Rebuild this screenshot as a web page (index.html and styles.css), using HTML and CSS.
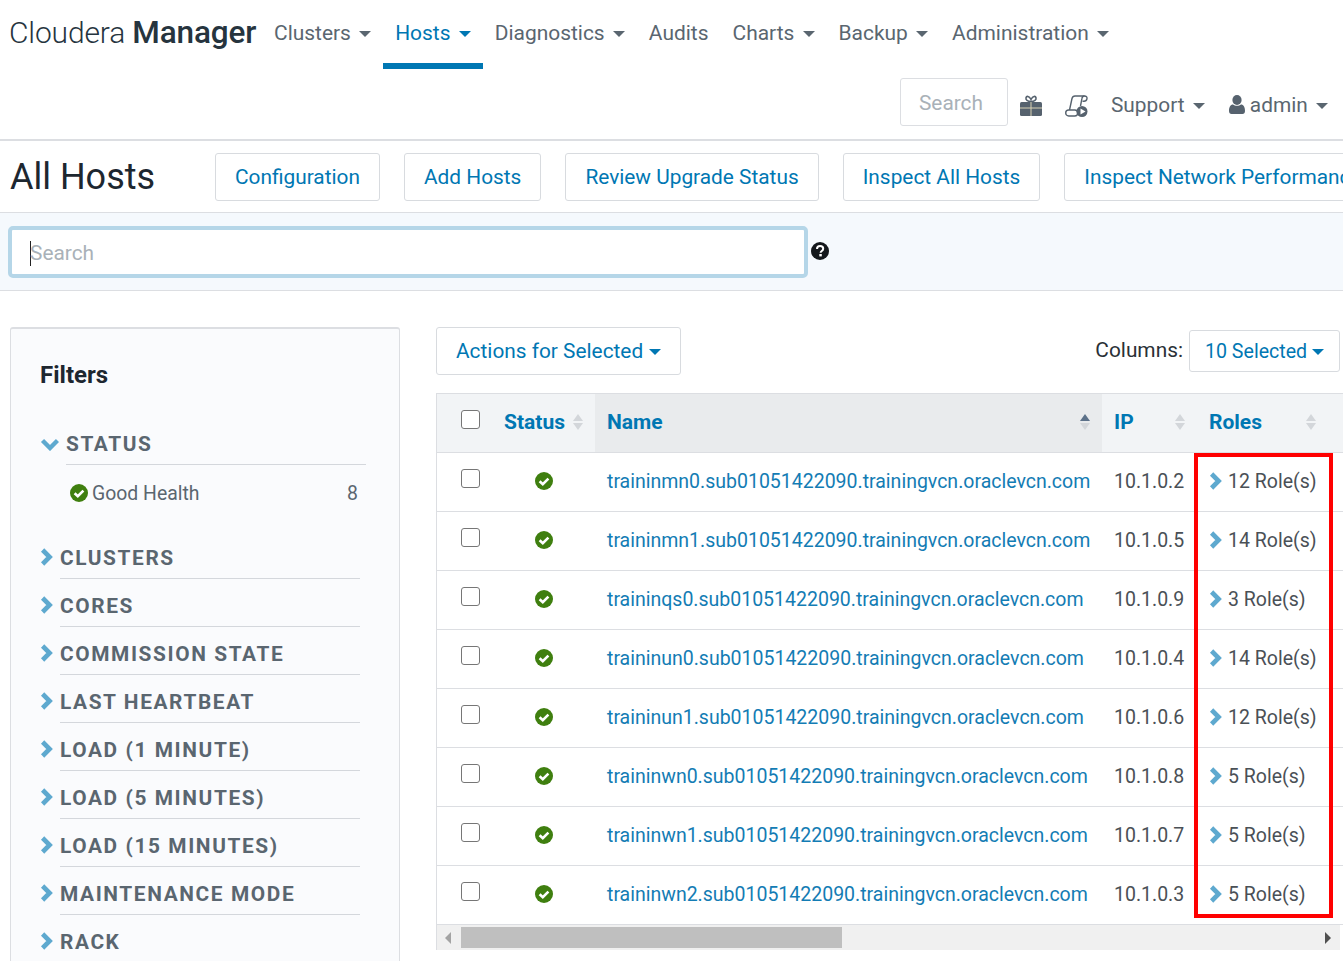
FILE: index.html
```html
<!DOCTYPE html>
<html lang="en">
<head>
    <meta charset="UTF-8">
    <title>All Hosts - Cloudera Manager</title>
    <link rel="stylesheet" href="styles.css">
</head>
<body>
    <svg class="defs" width="0" height="0">
        <symbol id="check" viewBox="0 0 18 18">
            <circle cx="9" cy="9" r="9" fill="#3f7f0f"/>
            <polyline points="4.6,9.2 7.8,12.2 13.4,6.6" fill="none" stroke="#fff" stroke-width="2.6"/>
        </symbol>
        <symbol id="chev-right" viewBox="0 0 13 18">
            <polyline points="2.6,2 9.6,9 2.6,16" fill="none" stroke="#5ea9cf" stroke-width="4.6"/>
        </symbol>
        <symbol id="sort" viewBox="0 0 12 18">
            <polygon points="6,1 11,8 1,8" fill="#d3d6da"/>
            <polygon points="1,10 11,10 6,17" fill="#d3d6da"/>
        </symbol>
        <symbol id="sort-up" viewBox="0 0 12 18">
            <polygon points="6,1 11,8 1,8" fill="#5c7189"/>
            <polygon points="1,10 11,10 6,17" fill="#d3d6da"/>
        </symbol>
    </svg>

    <!-- Top nav -->
    <header class="topbar">
        <div class="nav-row">
            <a class="brand">Cloudera <b>Manager</b></a>
            <ul class="nav">
                <li><a>Clusters <i class="caret"></i></a></li>
                <li class="active"><a>Hosts <i class="caret"></i></a></li>
                <li><a>Diagnostics <i class="caret"></i></a></li>
                <li><a>Audits</a></li>
                <li><a>Charts <i class="caret"></i></a></li>
                <li><a>Backup <i class="caret"></i></a></li>
                <li><a>Administration <i class="caret"></i></a></li>
            </ul>
        </div>
        <div class="tools-row">
            <div class="nav-search">Search</div>
            <svg class="tool-icon gift" width="22" height="21" viewBox="0 0 22 21">
                <path d="M11 6.500C7.500 6.500 5.500 5 6 2.800 6.500 .8 9 .6 11 4.500 13 .6 15.500 .8 16 2.800 16.500 5 14.500 6.500 11 6.500Z" fill="none" stroke="#56626e" stroke-width="1.600"/>
                <rect y="7" width="22" height="14" rx="1.500" fill="#56626e"/>
                <path d="M11 7v14M0 13h22" stroke="#d9d2b4" stroke-width="1"/>
            </svg>
            <svg class="tool-icon scroll" width="23" height="22" viewBox="0 0 23 22">
                <path d="M4.500 15 7 3.500C7.400 1.800 8.500 1 10 1h9.500c1.800 0 2.800 1.100 2.500 2.700-.3 1.600-1.500 2.600-3 2.600h-1.500" fill="none" stroke="#56626e" stroke-width="1.400"/>
                <path d="M19.500 1C18 1 17.200 2 17 3.200L15.500 11" fill="none" stroke="#56626e" stroke-width="1.400"/>
                <rect x=".7" y="15" width="12" height="6" rx="3" fill="#fff" stroke="#56626e" stroke-width="1.400"/>
                <circle cx="17" cy="16.500" r="5.500" fill="#56626e"/>
                <polygon points="15.500,13.500 20.500,16.500 15.500,19.500" fill="#fff"/>
            </svg>
            <a class="tool-link support">Support <i class="caret"></i></a>
            <a class="tool-link user">
                <svg width="16" height="19" viewBox="0 0 16 19">
                    <ellipse cx="8" cy="5" rx="4.600" ry="5" fill="#56626e"/>
                    <path d="M0 16c0-4 1.500-6.500 4-6.500 1 .8 2.400 1.300 4 1.300s3-.5 4-1.300c2.500 0 4 2.500 4 6.500 0 1.800-1 3-2.500 3h-11C1 19 0 17.800 0 16Z" fill="#56626e"/>
                </svg>
                admin <i class="caret"></i>
            </a>
        </div>
    </header>

    <!-- Page title and actions -->
    <div class="title-row">
        <h1>All Hosts</h1>
        <a class="btn">Configuration</a>
        <a class="btn">Add Hosts</a>
        <a class="btn">Review Upgrade Status</a>
        <a class="btn">Inspect All Hosts</a>
        <a class="btn">Inspect Network Performance</a>
    </div>

    <div class="search-band">
        <div class="search-box"><span class="cursor"></span>Search</div>
        <svg class="help" width="18" height="18" viewBox="0 0 18 18">
            <circle cx="9" cy="9" r="9" fill="#14181c"/>
            <path d="M6 7c0-1.800 1.300-3 3.100-3S12.200 5 12.200 6.700c0 2.300-2.600 2.300-2.600 4" fill="none" stroke="#fff" stroke-width="2"/>
            <rect x="8.300" y="12" width="2.500" height="2.400" fill="#fff"/>
        </svg>
    </div>

    <main class="main">
        <aside class="filters">
            <h2>Filters</h2>

            <div class="filter open">
                <svg class="chev-down" width="19" height="13" viewBox="0 0 19 13">
                    <polyline points="2.500,2.500 10,10 17.500,2.500" fill="none" stroke="#5ea9cf" stroke-width="4.400"/>
                </svg>
                <span>STATUS</span>
            </div>
            <div class="facet">
                <svg width="18" height="18"><use href="#check"/></svg>
                <span class="facet-name">Good Health</span>
                <span class="facet-count">8</span>
            </div>

            <div class="filter-list">
                <div class="filter"><svg width="13" height="18"><use href="#chev-right"/></svg><span>CLUSTERS</span></div>
                <div class="filter"><svg width="13" height="18"><use href="#chev-right"/></svg><span>CORES</span></div>
                <div class="filter"><svg width="13" height="18"><use href="#chev-right"/></svg><span>COMMISSION STATE</span></div>
                <div class="filter"><svg width="13" height="18"><use href="#chev-right"/></svg><span>LAST HEARTBEAT</span></div>
                <div class="filter"><svg width="13" height="18"><use href="#chev-right"/></svg><span>LOAD (1 MINUTE)</span></div>
                <div class="filter"><svg width="13" height="18"><use href="#chev-right"/></svg><span>LOAD (5 MINUTES)</span></div>
                <div class="filter"><svg width="13" height="18"><use href="#chev-right"/></svg><span>LOAD (15 MINUTES)</span></div>
                <div class="filter"><svg width="13" height="18"><use href="#chev-right"/></svg><span>MAINTENANCE MODE</span></div>
                <div class="filter"><svg width="13" height="18"><use href="#chev-right"/></svg><span>RACK</span></div>
            </div>
        </aside>

        <section class="content">
            <div class="toolbar">
                <a class="btn">Actions for Selected <i class="caret"></i></a>
                <div class="columns">
                    <span class="columns-label">Columns:</span>
                    <a class="btn btn-small">10 Selected <i class="caret"></i></a>
                </div>
            </div>

            <div class="table-wrap">
                <table class="hosts">
                    <colgroup>
                        <col class="c-check"><col class="c-status"><col class="c-name"><col class="c-ip"><col class="c-roles">
                    </colgroup>
                    <thead>
                        <tr>
                            <th class="cell-check"><input type="checkbox"></th>
                            <th><div class="th-in">Status <svg width="12" height="18"><use href="#sort"/></svg></div></th>
                            <th class="sorted"><div class="th-in">Name <svg width="12" height="18"><use href="#sort-up"/></svg></div></th>
                            <th><div class="th-in">IP <svg width="12" height="18"><use href="#sort"/></svg></div></th>
                            <th><div class="th-in roles-head">Roles <svg width="12" height="18"><use href="#sort"/></svg></div></th>
                        </tr>
                    </thead>
                    <tbody>
                        <tr>
                            <td class="cell-check"><input type="checkbox"></td>
                            <td class="center"><svg class="ok" width="18" height="18"><use href="#check"/></svg></td>
                            <td><a>traininmn0.sub01051422090.trainingvcn.oraclevcn.com</a></td>
                            <td>10.1.0.2</td>
                            <td><svg class="chev" width="13" height="18"><use href="#chev-right"/></svg>12 Role(s)</td>
                        </tr>
                        <tr>
                            <td class="cell-check"><input type="checkbox"></td>
                            <td class="center"><svg class="ok" width="18" height="18"><use href="#check"/></svg></td>
                            <td><a>traininmn1.sub01051422090.trainingvcn.oraclevcn.com</a></td>
                            <td>10.1.0.5</td>
                            <td><svg class="chev" width="13" height="18"><use href="#chev-right"/></svg>14 Role(s)</td>
                        </tr>
                        <tr>
                            <td class="cell-check"><input type="checkbox"></td>
                            <td class="center"><svg class="ok" width="18" height="18"><use href="#check"/></svg></td>
                            <td><a>traininqs0.sub01051422090.trainingvcn.oraclevcn.com</a></td>
                            <td>10.1.0.9</td>
                            <td><svg class="chev" width="13" height="18"><use href="#chev-right"/></svg>3 Role(s)</td>
                        </tr>
                        <tr>
                            <td class="cell-check"><input type="checkbox"></td>
                            <td class="center"><svg class="ok" width="18" height="18"><use href="#check"/></svg></td>
                            <td><a>traininun0.sub01051422090.trainingvcn.oraclevcn.com</a></td>
                            <td>10.1.0.4</td>
                            <td><svg class="chev" width="13" height="18"><use href="#chev-right"/></svg>14 Role(s)</td>
                        </tr>
                        <tr>
                            <td class="cell-check"><input type="checkbox"></td>
                            <td class="center"><svg class="ok" width="18" height="18"><use href="#check"/></svg></td>
                            <td><a>traininun1.sub01051422090.trainingvcn.oraclevcn.com</a></td>
                            <td>10.1.0.6</td>
                            <td><svg class="chev" width="13" height="18"><use href="#chev-right"/></svg>12 Role(s)</td>
                        </tr>
                        <tr>
                            <td class="cell-check"><input type="checkbox"></td>
                            <td class="center"><svg class="ok" width="18" height="18"><use href="#check"/></svg></td>
                            <td><a>traininwn0.sub01051422090.trainingvcn.oraclevcn.com</a></td>
                            <td>10.1.0.8</td>
                            <td><svg class="chev" width="13" height="18"><use href="#chev-right"/></svg>5 Role(s)</td>
                        </tr>
                        <tr>
                            <td class="cell-check"><input type="checkbox"></td>
                            <td class="center"><svg class="ok" width="18" height="18"><use href="#check"/></svg></td>
                            <td><a>traininwn1.sub01051422090.trainingvcn.oraclevcn.com</a></td>
                            <td>10.1.0.7</td>
                            <td><svg class="chev" width="13" height="18"><use href="#chev-right"/></svg>5 Role(s)</td>
                        </tr>
                        <tr>
                            <td class="cell-check"><input type="checkbox"></td>
                            <td class="center"><svg class="ok" width="18" height="18"><use href="#check"/></svg></td>
                            <td><a>traininwn2.sub01051422090.trainingvcn.oraclevcn.com</a></td>
                            <td>10.1.0.3</td>
                            <td><svg class="chev" width="13" height="18"><use href="#chev-right"/></svg>5 Role(s)</td>
                        </tr>
                    </tbody>
                </table>
                <div class="red-box"></div>
                <div class="hscroll">
                    <i class="arrow-left"></i>
                    <div class="thumb"></div>
                    <i class="arrow-right"></i>
                </div>
            </div>
        </section>
    </main>
</body>
</html>
```

FILE: styles.css
```css
/* Global Styles */
html, body {
    height: 100%;
}

body {
    margin: 0;
    width: 1343px;
    height: 961px;
    overflow: hidden;
    background: #fff;
    font-family: Roboto, "Liberation Sans", sans-serif;
    font-size: 20.85px;
    color: #4a5056;
}

.defs {
    position: absolute;
}

a {
    text-decoration: none;
    color: inherit;
}

.caret {
    display: inline-block;
    width: 0;
    height: 0;
    margin-left: 3px;
    vertical-align: 3px;
    border-top: 6px solid currentColor;
    border-left: 6px solid transparent;
    border-right: 6px solid transparent;
}

/* Top nav */
.topbar {
    height: 139px;
    border-bottom: 2px solid #dcdee2;
    color: #5a6670;
}

.nav-row {
    display: flex;
    height: 69px;
    padding-left: 9px;
}

.brand {
    flex: none;
    width: 253px;
    font-size: 30px;
    font-weight: 300;
    letter-spacing: -0.15px;
    line-height: 66px;
    color: #26343e;
    white-space: nowrap;
}

.brand b {
    font-size: 31.5px;
    font-weight: 500;
}

.nav {
    display: flex;
    list-style: none;
    margin: 0;
    padding: 0;
    font-size: 20.95px;
}

.nav li {
    padding: 0 12px;
    line-height: 66px;
    white-space: nowrap;
}

.nav li.active {
    color: #0077b3;
    border-bottom: 6px solid #0077b3;
    height: 63px;
}

.tools-row {
    display: flex;
    align-items: center;
    justify-content: flex-end;
    height: 48px;
    margin-top: 9px;
    padding-right: 15px;
}

.nav-search {
    box-sizing: border-box;
    width: 108px;
    height: 48px;
    padding-left: 18px;
    line-height: 48px;
    border: 1px solid #dcdee2;
    border-radius: 3px;
    color: #a9b1b8;
}

.tool-icon {
    margin-top: 7px;
}

.gift {
    margin-left: 12px;
}

.scroll {
    margin-left: 23px;
}

.tool-link {
    margin-top: 6px;
    white-space: nowrap;
}

.tool-link.support {
    margin-left: 23px;
}

.tool-link.user {
    margin-left: 24px;
}

.tool-link.user svg {
    vertical-align: -2px;
}

/* Page title row */
.title-row {
    display: flex;
    align-items: center;
    gap: 24px;
    height: 71px;
    padding-left: 10px;
    border-bottom: 1px solid #dcdee2;
    white-space: nowrap;
}

h1 {
    flex: none;
    width: 181px;
    margin: 0;
    font-size: 36px;
    font-weight: 400;
    color: #1d2730;
}

.btn {
    flex: none;
    display: inline-block;
    box-sizing: border-box;
    height: 48px;
    padding: 0 19px;
    line-height: 46px;
    border: 1px solid #d8dbdf;
    border-radius: 3px;
    color: #0077b3;
    background: #fff;
    white-space: nowrap;
}

.btn .caret {
    margin-left: 1px;
}

.btn-small {
    height: 42px;
    padding: 0 15px;
    font-size: 19.6px;
    line-height: 41px;
}

.btn-small .caret {
    margin-left: 0;
}

/* Search band */
.search-band {
    display: flex;
    align-items: center;
    height: 77px;
    padding-left: 8px;
    background: #f5f9fd;
    border-bottom: 1px solid #dcdee2;
}

.search-box {
    box-sizing: border-box;
    width: 800px;
    height: 52px;
    padding-left: 18px;
    line-height: 46px;
    background: #fff;
    border: 4px solid #b5d6e8;
    border-radius: 5px;
    color: #a9b1b8;
}

.cursor {
    display: inline-block;
    width: 1px;
    height: 25px;
    margin-right: -1px;
    vertical-align: -6px;
    background: #222;
}

.help {
    margin-left: 3px;
    margin-top: -2px;
}

/* Main layout */
.main {
    display: flex;
    align-items: flex-start;
    padding: 36px 0 0 10px;
}

/* Filters */
.filters {
    box-sizing: border-box;
    flex: none;
    width: 390px;
    height: 700px;
    padding: 0 39px 0 29px;
    background: #fafbfd;
    border: 1px solid #dcdee2;
    border-top-width: 2px;
    border-radius: 3px;
}

.filters h2 {
    margin: 31px 0 0;
    font-size: 24px;
    line-height: 30px;
    font-weight: 700;
    color: #1d2730;
}

.filter {
    display: flex;
    align-items: flex-start;
    height: 48px;
    font-weight: 700;
    letter-spacing: 1.6px;
    color: #5a6670;
}

.filter span {
    flex: 1;
    height: 40px;
    margin-left: 7px;
    line-height: 40px;
    border-bottom: 1px solid #d4d7dc;
}

.filter svg {
    flex: none;
    margin-top: 10px;
}

.filter.open {
    margin-top: 34px;
    height: auto;
}

.filter.open span {
    margin-right: -6px;
}

.filter.open svg {
    margin-top: 14px;
}

.facet {
    display: flex;
    align-items: center;
    height: 40px;
    margin: 8px 2px 0 30px;
    font-size: 19.4px;
    color: #5a6670;
}

.facet-name {
    flex: 1;
    margin-left: 4px;
}

.filter-list {
    margin-top: 25px;
}

/* Hosts table */
.content {
    flex: none;
    width: 904px;
    margin-left: 36px;
}

.toolbar {
    display: flex;
    align-items: center;
    justify-content: space-between;
    height: 48px;
    margin-bottom: 18px;
}

.columns {
    display: flex;
    align-items: center;
    gap: 6px;
    color: #2a3036;
}

.columns-label {
    margin-top: -2px;
}

.table-wrap {
    position: relative;
    width: 906px;
    border-left: 1px solid #dcdee2;
}

.hosts {
    table-layout: fixed;
    border-collapse: collapse;
    width: 906px;
}

.c-check { width: 55px; }
.c-status { width: 103px; }
.c-name { width: 507px; }
.c-ip { width: 95px; }
.c-roles { width: 146px; }

.hosts th {
    height: 59px;
    padding: 0 11px 2px 12px;
    box-sizing: border-box;
    background: #f2f4f6;
    border-top: 1px solid #dcdee2;
    border-bottom: 1px solid #dcdee2;
    color: #0077b3;
    font-size: 21px;
    font-weight: 700;
    text-align: left;
}

.hosts th.sorted {
    background: #e9ebed;
}

.th-in {
    display: flex;
    align-items: center;
    justify-content: space-between;
}

.roles-head {
    width: 108px;
}

.hosts td {
    height: 59px;
    padding: 0 12px 2px;
    box-sizing: border-box;
    border-bottom: 1px solid #dcdee2;
    white-space: nowrap;
    font-size: 19.5px;
    color: #4a5056;
}

.hosts td a {
    color: #137cb4;
}

.hosts td.center {
    padding-left: 0;
    padding-right: 0;
    text-align: center;
}

.hosts th.cell-check,
.hosts td.cell-check {
    padding-left: 24px;
    padding-right: 0;
}

.hosts input {
    appearance: none;
    box-sizing: border-box;
    width: 19px;
    height: 19px;
    margin: 0 0 5px;
    background: #fff;
    border: 1px solid #767676;
    border-radius: 3px;
    vertical-align: middle;
}

.hosts th input {
    margin-bottom: 6px;
}

.ok {
    vertical-align: middle;
    margin-bottom: 2px;
}

.chev {
    margin-right: 6px;
    vertical-align: -2px;
}

/* Annotation drawn over the roles column */
.red-box {
    position: absolute;
    left: 757px;
    top: 60px;
    box-sizing: border-box;
    width: 139px;
    height: 465px;
    border: 4px solid #f00;
}

.hscroll {
    display: flex;
    align-items: center;
    width: 903px;
    height: 25px;
    background: #f0f0f0;
}

.thumb {
    width: 381px;
    height: 21px;
    margin-left: 10px;
    background: #bfbfbf;
}

.arrow-left,
.arrow-right {
    width: 0;
    height: 0;
    border-top: 6px solid transparent;
    border-bottom: 6px solid transparent;
}

.arrow-left {
    margin-left: 8px;
    border-right: 6px solid #a3a3a3;
}

.arrow-right {
    margin-left: 483px;
    border-left: 6px solid #505050;
}
```
